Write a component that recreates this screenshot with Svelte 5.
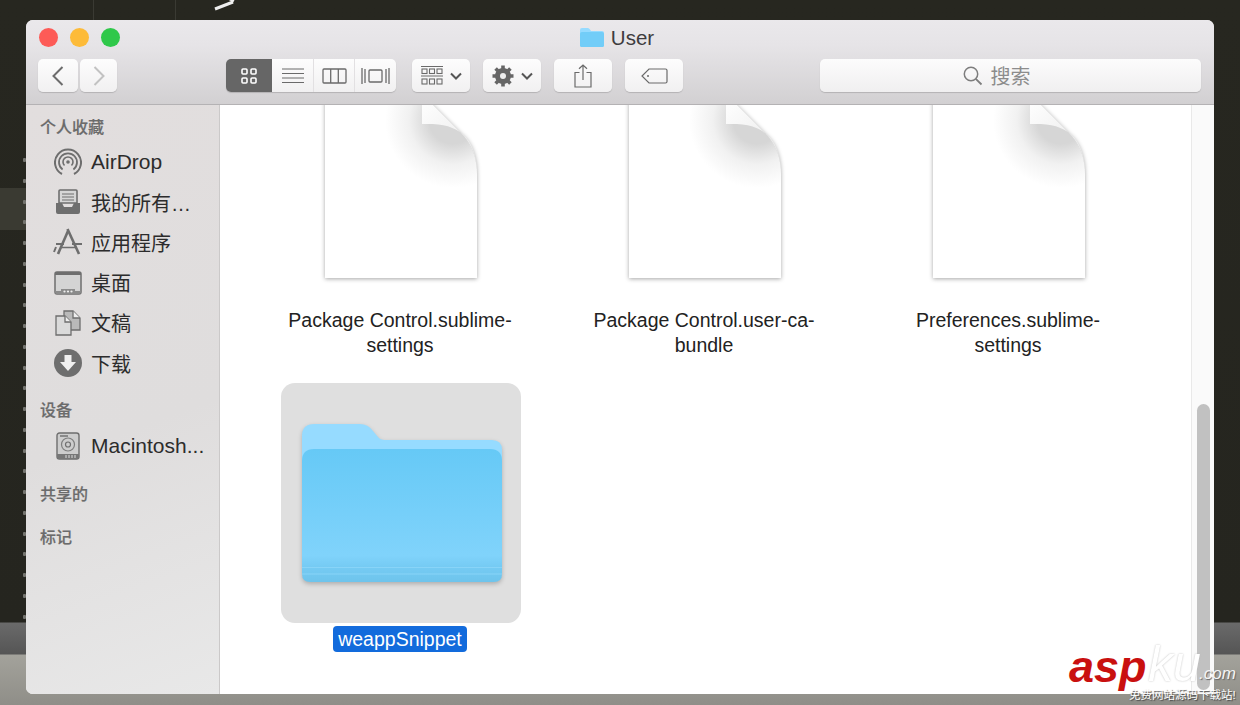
<script>
  // rows of dots along the editor gutter behind the window
  const gutter = Array.from({ length: 23 }, (_, i) => 158 + i * 20.75);

  const files = [
    { name: 'Package Control.sublime-settings' },
    { name: 'Package Control.user-ca-bundle' },
    { name: 'Preferences.sublime-settings' }
  ];
</script>

<div class="desktop">
  <div class="backdrop">
    <svg class="chevron" width="24" height="12" viewBox="0 0 24 12"><path d="M1 9 L19 2 M10 -4 L20 1" fill="none" stroke="#eee" stroke-width="3"/></svg>
    <div class="guide g1"></div>
    <div class="guide g2"></div>
    <div class="hilite"></div>
    {#each gutter as y}
      <i class="dot" style="top:{y}px"></i>
    {/each}
  </div>

  <div class="window">
    <header class="toolbar">
      <div class="titlebar">
        <div class="lights">
          <span class="light red"></span>
          <span class="light amber"></span>
          <span class="light green"></span>
        </div>
        <div class="title">
          <svg width="24" height="19" viewBox="0 0 24 19">
            <path d="M0 2 Q0 0 2 0 H8 Q9 0 10 1.500 L11 3 H22 Q24 3 24 5 V10 H0 Z" fill="#96dbff"/>
            <path d="M0 6 Q0 4 2 4 H22 Q24 4 24 6 V17.500 Q24 19 22.500 19 H1.500 Q0 19 0 17.500 Z" fill="#72cdf8"/>
          </svg>
          <span>User</span>
        </div>
      </div>
      <div class="tools">
        <div class="nav">
          <button class="btn back" aria-label="back">
            <svg width="12" height="20" viewBox="0 0 12 20"><path d="M10.500 1 L1.500 10 L10.500 19" fill="none" stroke="#6c6c6c" stroke-width="2"/></svg>
          </button>
          <button class="btn forward" aria-label="forward">
            <svg width="12" height="20" viewBox="0 0 12 20"><path d="M1.500 1 L10.500 10 L1.500 19" fill="none" stroke="#c2c2c2" stroke-width="2"/></svg>
          </button>
        </div>

        <div class="views">
          <button class="seg active" aria-label="icons">
            <svg width="16" height="16" viewBox="0 0 16 16" fill="none" stroke="#fff" stroke-width="1.600">
              <rect x="1" y="1" width="5" height="5" rx="1"/><rect x="10" y="1" width="5" height="5" rx="1"/>
              <rect x="1" y="10" width="5" height="5" rx="1"/><rect x="10" y="10" width="5" height="5" rx="1"/>
            </svg>
          </button>
          <button class="seg list" aria-label="list">
            <svg width="22" height="16" viewBox="0 0 22 16" stroke="#6a6a6a" stroke-width="1.200"><path d="M0 1 H22 M0 5.500 H22 M0 10 H22 M0 14.500 H22"/></svg>
          </button>
          <button class="seg cols" aria-label="columns">
            <svg width="25" height="16" viewBox="0 0 25 16" fill="none" stroke="#6a6a6a" stroke-width="1.300"><rect x="1" y="1" width="23" height="14" rx="1"/><path d="M8.700 1 V15 M16.300 1 V15"/></svg>
          </button>
          <button class="seg flow" aria-label="cover flow">
            <svg width="29" height="16" viewBox="0 0 29 16" fill="none" stroke="#6a6a6a" stroke-width="1.300"><rect x="8" y="2" width="13" height="12" rx="1"/><path d="M1 0 V16 M4 1 V15 M25 1 V15 M28 0 V16"/></svg>
          </button>
        </div>

        <button class="btn arrange" aria-label="arrange">
          <svg width="22" height="20" viewBox="0 0 22 20" fill="none" stroke="#6a6a6a" stroke-width="1.100">
            <path d="M0 .5 H22 M0 10 H22"/>
            <rect x="1" y="3" width="5" height="4.500"/><rect x="8.500" y="3" width="5" height="4.500"/><rect x="16" y="3" width="5" height="4.500"/>
            <rect x="1" y="13" width="5" height="5"/><rect x="8.500" y="13" width="5" height="5"/><rect x="16" y="13" width="5" height="5"/>
          </svg>
          <svg class="caret" width="12" height="8" viewBox="0 0 12 8"><path d="M1 1.500 L6 6.500 L11 1.500" fill="none" stroke="#555" stroke-width="2"/></svg>
        </button>
        <button class="btn gear" aria-label="action">
          <svg width="22" height="22" viewBox="0 0 22 22">
            <circle cx="11" cy="11" r="5.500" fill="none" stroke="#666" stroke-width="5"/>
            <path d="M11 11 V0.500 M11 11 V21.500 M11 11 H0.500 M11 11 H21.500 M11 11 L3.600 3.600 M11 11 L18.400 3.600 M11 11 L3.600 18.400 M11 11 L18.400 18.400" stroke="#666" stroke-width="3.600"/>
            <circle cx="11" cy="11" r="3" fill="#eee"/>
          </svg>
          <svg class="caret" width="12" height="8" viewBox="0 0 12 8"><path d="M1 1.500 L6 6.500 L11 1.500" fill="none" stroke="#555" stroke-width="2"/></svg>
        </button>
        <button class="btn share" aria-label="share">
          <svg width="18" height="24" viewBox="0 0 18 24" fill="none" stroke="#6a6a6a" stroke-width="1.200"><path d="M5.500 8.500 H1 V23 H17 V8.500 H12.500 M9 16 V1 M5 4.800 L9 1 L13 4.800"/></svg>
        </button>
        <button class="btn tag" aria-label="tag">
          <svg width="27" height="16" viewBox="0 0 27 16" fill="none" stroke="#6a6a6a" stroke-width="1.200"><path d="M8 1 H24.500 Q26 1 26 2.500 V13.500 Q26 15 24.500 15 H8 L1 8 Z"/><circle cx="7" cy="8" r="1" fill="#6a6a6a" stroke="none"/></svg>
        </button>

        <div class="search">
          <svg width="20" height="20" viewBox="0 0 20 20" fill="none" stroke="#7d7d7d" stroke-width="1.500"><circle cx="8" cy="8" r="6.700"/><path d="M12.800 12.800 L18.500 18.500" stroke-width="1.800"/></svg>
          <span>搜索</span>
        </div>
      </div>
    </header>

    <div class="body">
      <aside class="sidebar">
        <h3 class="first">个人收藏</h3>
        <ul>
          <li>
            <svg width="28" height="28" viewBox="0 0 28 28" fill="none" stroke="#6e6e6e">
              <path d="M8 26 A13 13 0 1 1 20 26" stroke-width="2"/>
              <path d="M8.600 21.500 A9 9 0 1 1 19.400 21.500" stroke-width="1.800"/>
              <path d="M10.500 17.500 A5 5 0 1 1 17.500 17.500" stroke-width="1.600"/>
              <circle cx="14" cy="14" r="1.800" fill="#6e6e6e" stroke="none"/>
            </svg>
            <span class="latin">AirDrop</span>
          </li>
          <li>
            <svg width="26" height="26" viewBox="0 0 26 26">
              <path d="M4 2 Q4 1 5 1 H21 Q22 1 22 2 V14 H4 Z" fill="#d6d6d6" stroke="#6e6e6e" stroke-width="1.600"/>
              <path d="M7 5 H19 M7 8 H19 M7 11 H19" stroke="#6e6e6e" stroke-width="1.200"/>
              <path d="M1 14 H7 L9 18 H17 L19 14 H25 V23 Q25 25 23 25 H3 Q1 25 1 23 Z" fill="#6e6e6e"/>
            </svg>
            <span>我的所有…</span>
          </li>
          <li>
            <svg width="30" height="28" viewBox="0 0 30 28" fill="none" stroke="#6e6e6e">
              <path d="M14.500 1 L26 26" stroke-width="2.600"/>
              <path d="M15 3 L5 26" stroke-width="2.600"/>
              <path d="M1 24 L3 19 M3 16 H11 M19 16 H29" stroke-width="2"/>
              <path d="M7 19.500 H23" stroke-width="1.500"/>
            </svg>
            <span>应用程序</span>
          </li>
          <li>
            <svg width="28" height="24" viewBox="0 0 28 24">
              <rect x="1" y="1" width="26" height="22" rx="2" fill="#d4d4d4" stroke="#6e6e6e" stroke-width="1.500"/>
              <path d="M1 3 Q1 1 3 1 H25 Q27 1 27 3 V4 H1 Z" fill="#6e6e6e"/>
              <path d="M1 20 H27 V21 Q27 23 25 23 H3 Q1 23 1 21 Z" fill="#8b8b8b"/>
              <path d="M7 18 H21 V23 H7 Z" fill="#8b8b8b"/>
              <circle cx="10.500" cy="20.500" r="1.100" fill="#eee"/><circle cx="14" cy="20.500" r="1.100" fill="#eee"/><circle cx="17.500" cy="20.500" r="1.100" fill="#eee"/>
            </svg>
            <span>桌面</span>
          </li>
          <li>
            <svg width="26" height="26" viewBox="0 0 26 26" stroke="#6e6e6e" stroke-width="1.300">
              <path d="M9 1 H18 L25 8 V20 H9 Z" fill="#b9b9b9"/>
              <path d="M18 1 V8 H25" fill="#eee"/>
              <path d="M1 6 H10 L16 12 V25 H1 Z" fill="#dadada"/>
              <path d="M10 6 V12 H16" fill="#eee"/>
            </svg>
            <span>文稿</span>
          </li>
          <li>
            <svg width="28" height="28" viewBox="0 0 28 28">
              <circle cx="14" cy="14" r="14" fill="#6e6e6e"/>
              <path d="M10.500 6 H17.500 V13 H22 L14 22 L6 13 H10.500 Z" fill="#f0f0f0"/>
            </svg>
            <span>下载</span>
          </li>
        </ul>
        <h3 class="dev">设备</h3>
        <ul>
          <li>
            <svg width="26" height="28" viewBox="0 0 26 28">
              <rect x="2" y="1" width="22" height="26" rx="2.500" fill="#cdcdcd" stroke="#6e6e6e" stroke-width="1.400"/>
              <path d="M5 4 H13" stroke="#6e6e6e" stroke-width="1.400"/>
              <circle cx="13" cy="12.500" r="6.500" fill="none" stroke="#7e7e7e" stroke-width="1.200"/>
              <circle cx="13" cy="12.500" r="2.500" fill="none" stroke="#6e6e6e" stroke-width="1.200"/>
              <path d="M2 22 H24 V25 Q24 27 22 27 H4 Q2 27 2 25 Z" fill="#777"/>
              <path d="M11 23 V26 M14 23 V26 M17 23 V26 M20 23 V26" stroke="#ddd"/>
            </svg>
            <span class="latin">Macintosh...</span>
          </li>
        </ul>
        <h3 class="shared">共享的</h3>
        <h3 class="tags">标记</h3>
      </aside>

      <main class="content">
        <div class="grid">
          {#each files as file}
            <div class="item">
              <div class="icon">
                <svg class="doc" width="152" height="184" viewBox="0 0 152 184">
                  <defs>
                    <radialGradient id="curl-{file.name.length}" cx="128" cy="26" r="68" gradientUnits="userSpaceOnUse">
                      <stop offset="0.350" stop-color="#d6d6d6"/>
                      <stop offset="0.650" stop-color="#f1f1f1"/>
                      <stop offset="1" stop-color="#fff"/>
                    </radialGradient>
                    <linearGradient id="flap-{file.name.length}" x1="97" y1="5" x2="150" y2="60" gradientUnits="userSpaceOnUse">
                      <stop offset="0" stop-color="#fff"/>
                      <stop offset="1" stop-color="#e9e9e9"/>
                    </linearGradient>
                  </defs>
                  <path d="M0 0 H97 L139 42 Q152 58 152 80 V184 H0 Z" fill="url(#curl-{file.name.length})"/>
                  <path d="M97 0 V30 H108 Q152 32 152 80 Q152 58 139 42 Z" fill="url(#flap-{file.name.length})"/>
                </svg>
              </div>
              <div class="label">{file.name}</div>
            </div>
          {/each}
          <div class="item selected">
            <div class="icon">
              <svg class="folder" width="200" height="158" viewBox="0 0 200 158">
                <defs>
                  <linearGradient id="front" x1="0" y1="0" x2="0" y2="1">
                    <stop offset="0" stop-color="#66c9f6"/>
                    <stop offset="0.800" stop-color="#80d3fb"/>
                    <stop offset="0.880" stop-color="#76cbf4"/>
                    <stop offset="1" stop-color="#6ec4ec"/>
                  </linearGradient>
                </defs>
                <path d="M0 12 Q0 0 12 0 H58 Q66 0 71 7 L76 13 Q78 16 83 16 H190 Q200 16 200 26 V60 H0 Z" fill="#96dbff"/>
                <path d="M0 37 Q0 25 12 25 H188 Q200 25 200 37 V150 Q200 158 192 158 H8 Q0 158 0 150 Z" fill="url(#front)"/>
                <path d="M0 143.500 H200 M0 150 H200" stroke="#88d4f8" stroke-width="1"/>
              </svg>
            </div>
            <div class="label"><span class="pill">weappSnippet</span></div>
          </div>
        </div>
        <div class="scrollbar"><div class="thumb"></div></div>
      </main>
    </div>
  </div>

  <div class="watermark">
    <span class="asp">asp</span><span class="ku">ku</span><span class="com">.com</span>
    <span class="slogan">免费网站源码下载站!</span>
  </div>
</div>

<style>
  :global(body) {
    margin: 0;
    font-family: "Liberation Sans", "Noto Sans CJK SC", sans-serif;
  }

  .desktop {
    position: relative;
    width: 1240px;
    height: 705px;
    box-sizing: border-box;
    padding: 20px 26px 11px;
    overflow: hidden;
    background: linear-gradient(#272720 0, #25251f 622px, #6a6a6a 623px, #555 654px, #a3a29b 655px, #8f8e88 705px);
  }

  .backdrop {
    position: absolute;
    inset: 0;
  }

  .chevron {
    position: absolute;
    left: 214px;
    top: 0;
  }

  .guide {
    position: absolute;
    top: 0;
    width: 1px;
    height: 20px;
    background: #3a3a33;
  }

  .g1 { left: 93px; }
  .g2 { left: 175px; }

  .hilite {
    position: absolute;
    left: 0;
    top: 188px;
    width: 26px;
    height: 42px;
    background: #3a3a32;
  }

  .dot {
    position: absolute;
    left: 23px;
    width: 3px;
    height: 4px;
    background: #74746f;
    border-radius: 1px;
  }

  .window {
    position: relative;
    height: 674px;
    display: flex;
    flex-direction: column;
    border-radius: 7px;
    overflow: hidden;
    background: #fff;
  }

  .toolbar {
    box-sizing: border-box;
    height: 85px;
    flex: none;
    background: linear-gradient(#eae8eb, #e6e4e7 30%, #d2d0d2);
    border-bottom: 1px solid #b4b2b4;
  }

  .titlebar {
    position: relative;
    height: 39px;
    display: flex;
    justify-content: center;
    align-items: center;
  }

  .lights {
    position: absolute;
    left: 12.500px;
    top: 8px;
    display: flex;
    gap: 12px;
  }

  .light {
    width: 19px;
    height: 19px;
    border-radius: 50%;
  }

  .red { background: #fd5b57; }
  .amber { background: #fdbb39; }
  .green { background: #2fc84a; }

  .title {
    display: flex;
    align-items: center;
    gap: 7px;
    font-size: 20.500px;
    color: #3e3c3e;
    margin: 0 6px 4px 0;
  }

  .tools {
    display: flex;
    align-items: flex-start;
    padding-left: 12px;
  }

  .nav {
    display: flex;
    gap: 2px;
    margin-right: 109px;
  }

  .btn, .seg {
    display: flex;
    align-items: center;
    justify-content: center;
    padding: 0;
    border: 0;
    height: 33px;
    background: linear-gradient(#fdfdfd, #f1f0f1);
  }

  .btn {
    border-radius: 5px;
    box-shadow: 0 1px 1px #b4b2b4;
  }

  .back { width: 40px; }
  .forward { width: 37px; }

  .views {
    display: flex;
    width: 170px;
    margin-right: 16px;
    border-radius: 5px;
    overflow: hidden;
    box-shadow: 0 1px 1px #b4b2b4;
  }

  .seg { flex: none; }

  .active { width: 46px; background: #666; }
  .list { width: 41px; }
  .cols { width: 41px; border-left: 1px solid #e2e0e2; box-sizing: border-box; }
  .flow { width: 42px; border-left: 1px solid #e2e0e2; box-sizing: border-box; }

  .arrange, .gear {
    width: 58px;
    gap: 7px;
    margin-right: 13px;
  }

  .share {
    width: 58px;
    margin-right: 13px;
  }

  .tag {
    width: 58px;
    margin-right: 137px;
  }

  .search {
    width: 381px;
    height: 33px;
    box-sizing: border-box;
    display: flex;
    align-items: center;
    justify-content: center;
    gap: 8px;
    border-radius: 5px;
    background: linear-gradient(#fcfcfc, #f0eff0);
    box-shadow: 0 1px 1px #b4b2b4;
    color: #8c8c8c;
    font-size: 20px;
    padding-right: 28px;
  }

  .body {
    flex: 1;
    display: flex;
    min-height: 0;
  }

  .sidebar {
    width: 194px;
    box-sizing: border-box;
    flex: none;
    padding-left: 14px;
    background: linear-gradient(160deg, #e2dede, #dfdddd 55%, #e8e8e8);
    border-right: 1px solid #cbc9c9;
  }

  h3 {
    margin: 0;
    font-size: 16px;
    line-height: 22px;
    font-weight: 500;
    color: #6b6b6b;
    -webkit-text-stroke: 0.2px #6b6b6b;
  }

  .first { margin-top: 12px; margin-bottom: 3px; }
  .dev { margin-top: 17px; margin-bottom: 4px; }
  .shared { margin-top: 18px; }
  .tags { margin-top: 21px; }

  ul {
    list-style: none;
    margin: 0;
    padding: 0;
  }

  li {
    height: 40.200px;
    display: flex;
    align-items: center;
    position: relative;
    padding-left: 51px;
    font-size: 20px;
    color: #2c2c2c;
  }

  li svg {
    position: absolute;
    left: 28px;
    top: 50%;
    transform: translate(-50%, -50%);
  }

  .latin { font-size: 21px; }

  .content {
    flex: 1;
    position: relative;
    overflow: hidden;
    background: #fff;
  }

  .grid {
    display: grid;
    grid-template-columns: repeat(3, 304px);
    row-gap: 25px;
    padding-left: 61px;
    margin-top: -40px;
  }

  .item {
    width: 240px;
    display: flex;
    flex-direction: column;
    align-items: center;
  }

  .icon {
    width: 240px;
    height: 240px;
    display: flex;
    align-items: center;
    justify-content: center;
    border-radius: 14px;
  }

  .selected .icon {
    background: #dfdfdf;
  }

  .doc {
    margin-top: 2px;
    overflow: visible;
    filter: drop-shadow(0 1px 2px rgba(0, 0, 0, 0.35));
  }

  .folder {
    overflow: visible;
    margin-left: 2px;
    filter: drop-shadow(0 2px 2px rgba(0, 0, 0, 0.22));
  }

  .label {
    width: 240px;
    margin: 3px 0 0 -2px;
    text-align: center;
    font-size: 19.500px;
    line-height: 25px;
    color: #222;
  }

  .pill {
    display: inline-block;
    background: #126bdc;
    color: #fff;
    border-radius: 4px;
    padding: 0 5px;
    line-height: 26px;
  }

  .scrollbar {
    position: absolute;
    top: 0;
    right: 0;
    bottom: 0;
    width: 22px;
    background: #fafafa;
    border-left: 1px solid #e9e9e9;
  }

  .thumb {
    position: absolute;
    left: 5px;
    top: 299px;
    width: 13px;
    height: 286px;
    border-radius: 7px;
    background: #c1c1c1;
  }

  .watermark {
    position: absolute;
    left: 1069px;
    top: 640px;
    width: 171px;
    height: 65px;
    font-style: italic;
    white-space: nowrap;
  }

  .asp {
    position: absolute;
    left: 0;
    top: 1px;
    font-size: 45px;
    font-weight: 700;
    color: #c9100f;
  }

  .ku {
    position: absolute;
    left: 79px;
    top: -5px;
    font-size: 50px;
    color: #fff;
    text-shadow: 0 0 2px #bbb;
  }

  .com {
    position: absolute;
    left: 130px;
    top: 24px;
    font-size: 17px;
    color: #f4f4f4;
    text-shadow: 1px 1px 1px #666;
  }

  .slogan {
    position: absolute;
    left: 60px;
    top: 46px;
    font-size: 11.500px;
    font-style: normal;
    color: #fff;
    text-shadow: 1px 1px 1px #444;
  }
</style>
